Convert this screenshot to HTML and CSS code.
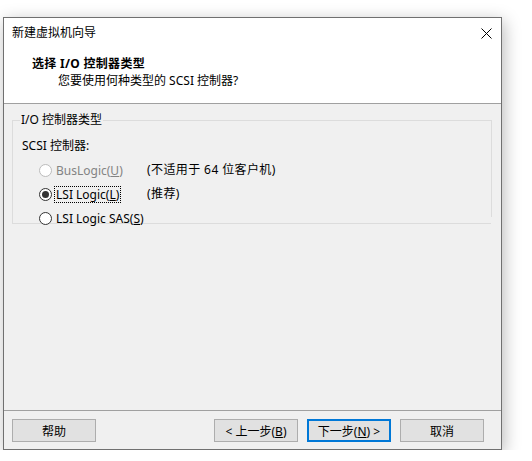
FILE: index.html
```html
<!DOCTYPE html>
<html>
	<head>
		<meta charset="utf-8">
		<link rel="stylesheet" href="styles.css">
	</head>
	<body>
		<div class="window">
			<div class="titlebar">
				<span class="title">新建虚拟机向导</span>
				<svg class="close" width="11" height="11" viewBox="0 0 11 11">
					<path d="M0.5 0.5 L10.5 10.5 M10.5 0.5 L0.5 10.5" stroke="#000" stroke-width="1" fill="none"/>
				</svg>
			</div>
			<div class="header">
				<div class="heading">选择 I/O 控制器类型</div>
				<div class="subheading">您要使用何种类型的 SCSI 控制器?</div>
			</div>
			<div class="content">
				<fieldset class="group">
					<legend>I/O 控制器类型</legend>
					<div class="caption">SCSI 控制器:</div>
					<div class="options">
						<div class="radio disabled"><span class="dot"></span><span class="label">BusLogic(<u>U</u>)</span></div>
						<div class="note">(不适用于 64 位客户机)</div>
						<div class="radio checked"><span class="dot"></span><span class="label focus">LSI Logic(<u>L</u>)</span></div>
						<div class="note">(推荐)</div>
						<div class="radio"><span class="dot"></span><span class="label">LSI Logic SAS(<u>S</u>)</span></div>
						<div class="note"></div>
					</div>
				</fieldset>
			</div>
			<div class="footer">
				<button class="btn">帮助</button>
				<div class="spacer"></div>
				<button class="btn">&lt; 上一步(<u>B</u>)</button>
				<button class="btn default">下一步(<u>N</u>) &gt;</button>
				<button class="btn">取消</button>
			</div>
		</div>
	</body>
</html>
```
FILE: styles.css
```css
body {
	margin: 0;
	background: #fff;
	font-family: "Noto Sans", "Noto Sans CJK SC", sans-serif;
	font-size: 12px;
	color: #000;
}
.window {
	margin: 17px 0 0 3px;
	width: 497px;
	height: 431px;
	border: 1px solid #707070;
	background: #f0f0f0;
	display: flex;
	flex-direction: column;
	box-shadow: 2px 4px 16px rgba(0,0,0,0.28);
}
.titlebar {
	background: #fff;
	height: 29px;
	display: flex;
	align-items: center;
	padding: 0 8px 0 8px;
}
.title {
	flex: 1;
	line-height: 16px;
}
.close {
	margin-right: 1px;
	margin-top: 1px;
}
.header {
	background: #fff;
	height: 57px;
	padding-left: 28px;
	padding-top: 8px;
	box-sizing: border-box;
	border-bottom: 1px solid #a0a0a0;
}
.heading {
	font-weight: bold;
	line-height: 17px;
	letter-spacing: 0.3px;
}
.subheading {
	padding-left: 26px;
	line-height: 17px;
}
.content {
	flex: 1;
	padding: 8px 9px 0 8px;
}
.group {
	position: relative;
	margin: 0;
	border: 1px solid #dcdcdc;
	padding: 10px 9px 0 9px;
	height: 112px;
	box-sizing: border-box;
}
.group::after {
	content: "";
	position: absolute;
	right: -1px;
	top: 89px;
	width: 1px;
	height: 13px;
	background: #f0f0f0;
}
.group legend {
	padding: 0 1px;
	margin-left: -2px;
	line-height: 16px;
}
.caption {
	line-height: 16px;
}
.options {
	display: grid;
	grid-template-columns: 108px auto;
	grid-auto-rows: 24px;
	margin-left: 17px;
	margin-top: 4px;
	align-items: center;
}
.radio {
	display: flex;
	align-items: center;
}
.dot {
	width: 11px;
	height: 11px;
	border: 1px solid #333;
	border-radius: 50%;
	background: #fff;
	display: flex;
	align-items: center;
	justify-content: center;
	margin-right: 2px;
}
.checked .dot::after {
	content: "";
	width: 7px;
	height: 7px;
	border-radius: 50%;
	background: #333;
}
.disabled .dot {
	border-color: #bcbcbc;
	background: #fff;
}
.disabled .label {
	color: #838383;
}
.label {
	padding: 0 1px;
	line-height: 15px;
	border: 1px dotted transparent;
}
.label.focus {
	border-color: #000;
}
.note {
	line-height: 16px;
	letter-spacing: 0.4px;
}
.footer {
	height: 39px;
	border-top: 1px solid #a0a0a0;
	display: flex;
	align-items: flex-start;
	padding: 8px 17px 0 8px;
	box-sizing: border-box;
	gap: 9px;
}
.spacer {
	flex: 1;
}
.btn {
	width: 84px;
	height: 23px;
	margin: 0;
	padding: 0;
	background: #e1e1e1;
	border: 1px solid #adadad;
	font-family: inherit;
	font-size: 12px;
	color: #000;
}
.btn.default {
	border: 2px solid #0078d7;
}
```
